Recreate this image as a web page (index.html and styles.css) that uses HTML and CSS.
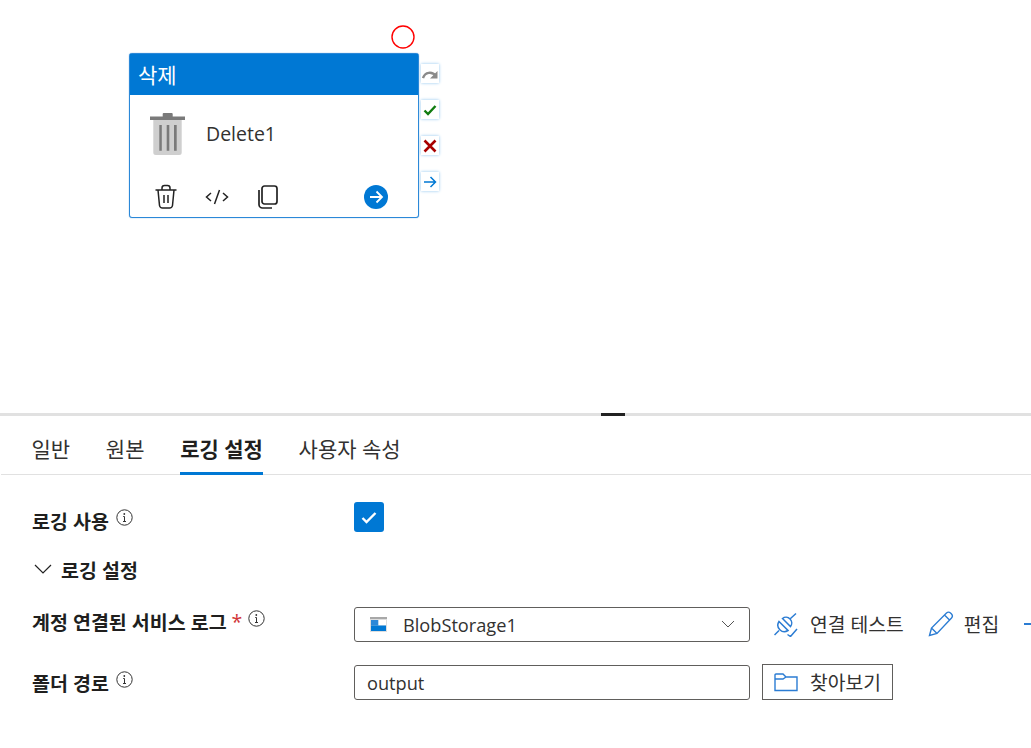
FILE: index.html
```html
<!DOCTYPE html>
<html lang="ko">
<head>
<meta charset="utf-8">
<title>삭제</title>
<link rel="stylesheet" href="styles.css">
</head>
<body>
<section class="canvas">
  <svg class="red-ring" width="26" height="26" viewBox="0 0 26 26"><circle cx="13" cy="13" r="11" fill="#fff" stroke="#f00" stroke-width="1.4"/></svg>
  <div class="node">
    <div class="node-title">삭제</div>
    <div class="node-body">
      <svg class="node-icon" width="36" height="43" viewBox="0 0 36 43"><path d="M3.300 5h28.400v34.500a2.500 2.500 0 0 1-2.500 2.500H5.800a2.500 2.500 0 0 1-2.500-2.500z" fill="#cfcfcf"/><path d="M0 3.500h35V7H0z" fill="#7a7a7a"/><path d="M12.700 1a1 1 0 0 1 1-1h8a1 1 0 0 1 1 1v3h-10z" fill="#7a7a7a"/><path d="M9.300 12h2.500v25.700H9.300zM16.700 12h2.600v25.700h-2.600zM24 12h2.700v25.700H24z" fill="#7a7a7a"/></svg>
      <span class="node-name">Delete1</span>
    </div>
    <div class="node-actions">
      <svg width="24" height="26" viewBox="0 0 24 26" fill="none" stroke="#222" stroke-width="1.500"><path d="M1.500 6h21M8 6V4a2.500 2.500 0 0 1 2.500-2.500h3A2.500 2.500 0 0 1 16 4v2M4 6l1.500 15.500A3 3 0 0 0 8.500 24h7a3 3 0 0 0 3-2.500L20 6M10 11v8M14 11v8"/></svg>
      <svg class="act-code" width="24" height="18" viewBox="0 0 24 18" fill="none" stroke="#222" stroke-width="1.500"><path d="M6 5l-4.500 4L6 13M18 5l4.500 4-4.500 4M14.500 2L9.500 16"/></svg>
      <svg class="act-copy" width="22" height="24" viewBox="0 0 22 24" fill="none" stroke="#222" stroke-width="1.700"><rect x="6" y="1" width="15" height="18" rx="2.500"/><path d="M3 5v14.500A3.500 3.500 0 0 0 6.500 23H16"/></svg>
      <svg class="act-go" width="24" height="24" viewBox="0 0 24 24"><circle cx="12" cy="12" r="12" fill="#0078d4"/><path d="M6 12h11.500M12.500 6.500L18 12l-5.500 5.500" fill="none" stroke="#fff" stroke-width="1.800"/></svg>
    </div>
    <div class="ports">
      <span class="port"><svg width="16" height="12" viewBox="0 0 16 12" fill="none" stroke="#8a8a8a" stroke-width="2.400"><path d="M1 10C3 4 10 3 14 8"/><path d="M15.500 3v7.500H8" fill="#8a8a8a" stroke="none"/></svg></span>
      <span class="port"><svg width="14" height="12" viewBox="0 0 14 12" fill="none" stroke="#107c10" stroke-width="2.400"><path d="M1.500 6.500L5 10l7.500-8"/></svg></span>
      <span class="port"><svg width="14" height="14" viewBox="0 0 14 14" fill="none" stroke="#a80000" stroke-width="2.600"><path d="M1.500 1.500l11 11M12.500 1.500l-11 11"/></svg></span>
      <span class="port"><svg width="14" height="12" viewBox="0 0 14 12" fill="none" stroke="#0078d4" stroke-width="1.500"><path d="M1 6h11.500M7.500 1l5 5-5 5"/></svg></span>
    </div>
  </div>
</section>
<div class="splitter"><span class="grip"></span></div>
<nav class="tabs">
  <a class="tab">일반</a>
  <a class="tab">원본</a>
  <a class="tab active">로깅 설정</a>
  <a class="tab">사용자 속성</a>
</nav>
<main class="form">
  <div class="row row-enable">
    <div class="label"><span>로깅 사용</span><svg class="info" width="17" height="17" viewBox="0 0 17 17"><circle cx="8.500" cy="8.500" r="7.700" fill="none" stroke="#333" stroke-width="1"/><path d="M8.500 7.500v5M7.200 7.500h1.300M7 12.500h3" fill="none" stroke="#333"/><circle cx="8.300" cy="5" r=".9" fill="#333"/></svg></div>
    <span class="checkbox"><svg width="16" height="13" viewBox="0 0 16 13" fill="none" stroke="#fff" stroke-width="2.400"><path d="M1.500 7l4 4 9-9"/></svg></span>
  </div>
  <div class="section-head">
    <svg width="18" height="10" viewBox="0 0 18 10" fill="none" stroke="#222" stroke-width="1.200"><path d="M1 1l8 8 8-8"/></svg>
    <span>로깅 설정</span>
  </div>
  <div class="row row-service">
    <div class="label"><span>계정 연결된 서비스 로그</span><span class="req">*</span><svg class="info" width="17" height="17" viewBox="0 0 17 17"><circle cx="8.500" cy="8.500" r="7.700" fill="none" stroke="#333" stroke-width="1"/><path d="M8.500 7.500v5M7.200 7.500h1.300M7 12.500h3" fill="none" stroke="#333"/><circle cx="8.300" cy="5" r=".9" fill="#333"/></svg></div>
    <div class="select">
      <svg class="blob" width="17" height="15" viewBox="0 0 17 15"><path d="M0 0h17v15H0z" fill="#a8a8a8"/><path d="M0 2h17v13H0z" fill="#dedede"/><path d="M1 3h7.500v5.500H1z" fill="#2b88d8"/><path d="M8.500 3H16v5.500H8.500z" fill="#fff"/><path d="M1 8.500h15V14H1z" fill="#0078d4"/></svg>
      <span class="select-text">BlobStorage1</span>
      <svg class="select-chev" width="14" height="8" viewBox="0 0 14 8" fill="none" stroke="#555" stroke-width="1"><path d="M1 1l6 6 6-6"/></svg>
    </div>
    <a class="cmd"><svg width="26" height="26" viewBox="0 0 26 26" fill="none" stroke="#2b7cd3" stroke-width="1.500"><path d="M5 10.500l9 9A6.500 6.500 0 0 1 5 10.500zM8.500 7.500l8 8A5.700 5.700 0 0 0 8.500 7.500zM0.500 24L5 19.500M16.500 7.500L22 2.500M13.500 23.500l3 2 6.500-7.500"/></svg><span>연결 테스트</span></a>
    <a class="cmd"><svg width="26" height="26" viewBox="0 0 26 26" fill="none" stroke="#2b7cd3" stroke-width="1.400"><path d="M1.500 24.500l2-7.500L18.500 2a3 3 0 0 1 4 0l1 1a3 3 0 0 1 0 4L9 22.500zM3.500 17L9 22.500M16.500 4l5.500 5.500"/></svg><span>편집</span></a>
    <span class="dash"></span>
  </div>
  <div class="row row-folder">
    <div class="label"><span>폴더 경로</span><svg class="info" width="17" height="17" viewBox="0 0 17 17"><circle cx="8.500" cy="8.500" r="7.700" fill="none" stroke="#333" stroke-width="1"/><path d="M8.500 7.500v5M7.200 7.500h1.300M7 12.500h3" fill="none" stroke="#333"/><circle cx="8.300" cy="5" r=".9" fill="#333"/></svg></div>
    <div class="input">output</div>
    <a class="browse"><svg width="24" height="19" viewBox="0 0 24 19" fill="none" stroke="#2b7cd3" stroke-width="1.400"><path d="M1 17.500V2a1 1 0 0 1 1-1h7l3 3h11v13.500zM1 6h8l3-2"/></svg><span>찾아보기</span></a>
  </div>
</main>
</body>
</html>
```
FILE: styles.css
```css
* { box-sizing: border-box; }
html, body { margin: 0; height: 100%; overflow: hidden; }
body {
  width: 1031px;
  height: 748px;
  background: #fff;
  color: #323130;
  font-family: "Open Sans", "Noto Sans CJK KR", sans-serif;
  font-size: 18.200px;
}
.canvas { position: relative; height: 413px; }
.red-ring { position: absolute; left: 390px; top: 24px; }
.node {
  position: absolute;
  left: 129px;
  top: 53px;
  width: 290px;
  height: 165px;
  border: 1px solid #2b88d8;
  border-radius: 3px;
  background: #fff;
  box-shadow: 0 0 1px #2b88d8;
}
.node-title {
  height: 41px;
  background: #0078d4;
  color: #fff;
  font-size: 21px;
  line-height: 42px;
  padding-left: 8px;
}
.node-body { display: flex; align-items: center; height: 76px; padding-left: 20px; }
.node-icon { flex: none; margin-top: 2px; }
.node-name { margin-left: 20px; font-size: 19.500px; }
.node-actions { display: flex; align-items: center; padding-left: 24px; height: 52px; }
.act-code { margin-left: 27px; }
.act-copy { margin-left: 27px; }
.act-go { margin-left: 86px; }
.ports {
  position: absolute;
  left: 291px;
  top: 10px;
  display: flex;
  flex-direction: column;
  gap: 17px;
}
.port {
  display: flex;
  align-items: center;
  justify-content: center;
  width: 18px;
  height: 19px;
  background: #fff;
  box-shadow: 0 0 3px #8fc4ee;
}
.splitter { position: relative; height: 3px; background: #e1e1e1; }
.grip { position: absolute; left: 601px; top: 0; width: 24px; height: 3px; background: #222; }
.tabs {
  display: flex;
  gap: 35.700px;
  height: 59px;
  margin-left: 1px;
  padding-left: 30.500px;
  border-bottom: 1px solid #e1e1e1;
}
.tab {
  display: flex;
  align-items: center;
  height: 59px;
  font-size: 21px;
  padding-top: 5px;
}
.tab.active { font-weight: 700; color: #201f1e; border-bottom: 3px solid #0078d4; padding-top: 8px; }
.form { padding-left: 32px; }
.row { display: flex; align-items: center; }
.label {
  display: flex;
  align-items: center;
  width: 322px;
  flex: none;
  font-weight: 700;
  font-size: 19.500px;
  color: #201f1e;
}
.info { margin-left: 7px; margin-top: -6px; flex: none; }
.req { color: #d13438; margin-left: 5px; font-weight: 400; }
.row-service .info { margin-left: 6px; }
.row-enable { margin-top: 26px; height: 32px; }
.row-enable .label { margin-top: 6px; }
.checkbox {
  display: flex;
  align-items: center;
  justify-content: center;
  width: 30px;
  height: 30px;
  background: #0078d4;
  border-radius: 3px;
}
.section-head {
  display: flex;
  align-items: center;
  gap: 9px;
  margin-top: 22px;
  height: 28px;
  padding-left: 2px;
  font-weight: 700;
  font-size: 19.500px;
  color: #201f1e;
}
.row-service { margin-top: 23px; height: 36px; }
.row-service .label { margin-top: -6px; }
.select {
  display: flex;
  align-items: center;
  width: 396px;
  height: 35px;
  flex: none;
  padding: 0 14px 0 15px;
  border: 1px solid #605e5c;
  border-radius: 3px;
}
.select-text { margin-left: 16px; flex: 1; padding-top: 2px; }
.cmd { display: flex; align-items: center; gap: 10px; margin-left: 24px; font-size: 19.300px; flex: none; }
.dash { flex: none; width: 8px; height: 2px; margin-left: 25px; background: #2b7cd3; }
.row-folder { margin-top: 22px; height: 36px; }
.input {
  display: flex;
  align-items: center;
  width: 396px;
  height: 35px;
  flex: none;
  padding: 2px 0 0 12px;
  border: 1px solid #605e5c;
  border-radius: 3px;
}
.browse {
  display: flex;
  align-items: center;
  gap: 12px;
  height: 36px;
  margin-left: 12px;
  padding: 0 11px;
  border: 1px solid #605e5c;
  font-size: 19.300px;
}
```
